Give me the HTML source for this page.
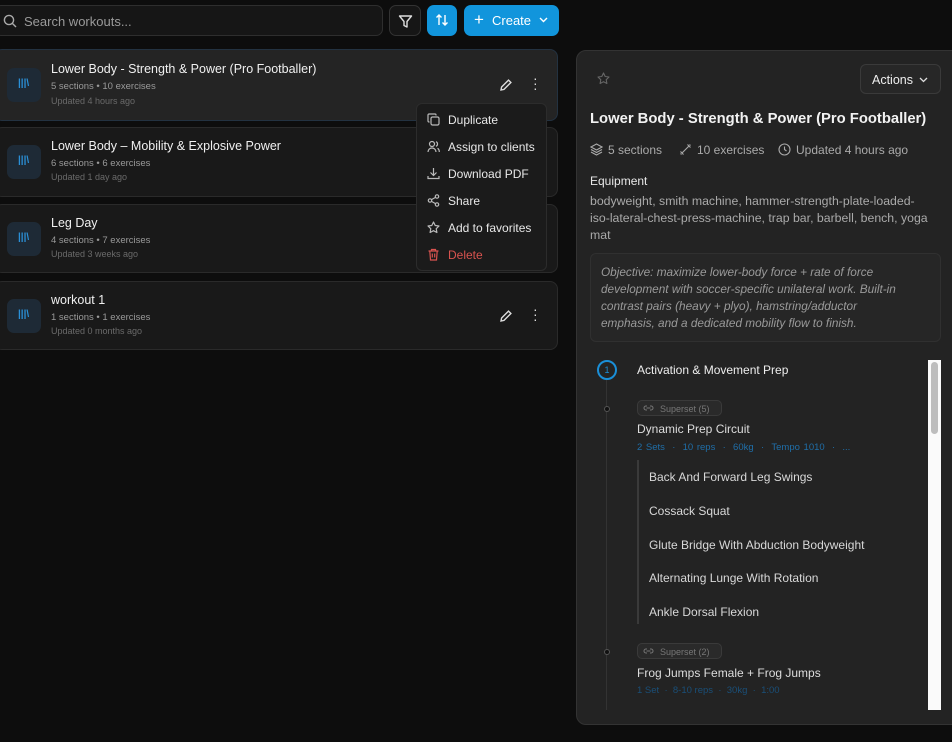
<!DOCTYPE html>
<html><head><style>
*{box-sizing:border-box;margin:0;padding:0}
body{width:952px;height:742px;background:#0d0d0d;font-family:"Liberation Sans",sans-serif;position:relative;overflow:hidden;color:#eee}
.abs{position:absolute}
.search{left:-6px;top:5px;width:389px;height:31px;border:1px solid #2e2e2e;border-radius:7px;background:#161616}
.search span{position:absolute;left:29px;top:8px;font-size:13px;color:#9a9a9a}
.btn{top:5px;height:31px;border-radius:7px}
.card{left:-6px;width:564px;border:1px solid #2a2a2a;border-radius:8px;background:#191919}
.card .ic{position:absolute;left:12px;width:34px;height:34px;border-radius:7px;background:#1e2a36}
.card .t{position:absolute;left:56px;font-size:12.5px;color:#f0f0f0}
.card .s{position:absolute;left:56px;font-size:9.5px;color:#9a9a9a}
.card .u{position:absolute;left:56px;font-size:9px;color:#6a6a6a}
.menu{left:416px;top:103px;width:131px;height:168px;background:#1b1b1b;border:1px solid #2c2c2c;border-radius:6px}
.mi{position:absolute;left:31px;font-size:12px;color:#e8e8e8}
.mic{position:absolute;left:10px}
.panel{left:576px;top:50px;width:390px;height:675px;background:#232323;border:1px solid #333;border-radius:10px}
.ex{position:absolute;left:649px;font-size:12px;color:#d8d8d8}
.badge{position:absolute;left:637px;width:85px;height:16px;border:1px solid #3a3a3a;border-radius:5px;background:#2a2a2a;font-size:9px;color:#777;padding:3px 0 0 22px}
</style></head><body>
<div class="abs search">
<svg class="abs" style="left:8px;top:8px" width="14" height="14" viewBox="0 0 14 14" fill="none" stroke="#aaa" stroke-width="1.4"><circle cx="6" cy="6" r="4.6"/><path d="M9.5 9.5L13 13"/></svg>
<span>Search workouts...</span></div>
<div class="abs btn" style="left:389px;width:32px;border:1px solid #333;background:#161616">
<svg class="abs" style="left:8px;top:8px" width="15" height="15" viewBox="0 0 15 15" fill="none" stroke="#ddd" stroke-width="1.4" stroke-linejoin="round"><path d="M1.5 2h12L9 7.5V13L6 11.5V7.5z"/></svg></div>
<div class="abs btn" style="left:427px;width:30px;background:#1195dc">
<svg class="abs" style="left:8px;top:8px" width="14" height="14" viewBox="0 0 14 14" fill="none" stroke="#fff" stroke-width="1.4"><path d="M4 12V2M1.5 4.5L4 2l2.5 2.5M10 2v10M7.5 9.5L10 12l2.5-2.5"/></svg></div>
<div class="abs btn" style="left:464px;width:95px;background:#1195dc">
<span class="abs" style="left:10px;top:5px;font-size:17px;color:#fff">+</span>
<span class="abs" style="left:28px;top:8px;font-size:13px;color:#fff">Create</span>
<svg class="abs" style="left:75px;top:12px" width="9" height="6" viewBox="0 0 9 6" fill="none" stroke="#fff" stroke-width="1.4"><path d="M1 1l3.5 3.5L8 1"/></svg></div>

<div class="abs card" style="top:49px;height:72px;background:#242424;border-color:#233241">
<div class="ic" style="top:18px"></div><div class="t" style="top:12px">Lower Body - Strength &amp; Power (Pro Footballer)</div><div class="s" style="top:31px">5 sections • 10 exercises</div><div class="u" style="top:46px">Updated 4 hours ago</div>
<svg class="abs" style="left:504px;top:28px" width="14" height="14" viewBox="0 0 14 14" fill="none" stroke="#ddd" stroke-width="1.4"><path d="M2 12l.6-3L9.5 2.1l2.4 2.4L5 11.4z"/></svg>
<span class="abs" style="left:538px;top:26px;color:#ddd;font-size:14px;line-height:5px;width:4px">·<br>·<br>·</span>
</div>
<div class="abs card" style="top:127px;height:70px"><div class="ic" style="top:17px"></div><div class="t" style="top:11px">Lower Body – Mobility &amp; Explosive Power</div><div class="s" style="top:30px">6 sections • 6 exercises</div><div class="u" style="top:44px">Updated 1 day ago</div></div>
<div class="abs card" style="top:204px;height:69px"><div class="ic" style="top:17px"></div><div class="t" style="top:11px">Leg Day</div><div class="s" style="top:30px">4 sections • 7 exercises</div><div class="u" style="top:44px">Updated 3 weeks ago</div></div>
<div class="abs card" style="top:281px;height:69px"><div class="ic" style="top:17px"></div><div class="t" style="top:11px">workout 1</div><div class="s" style="top:30px">1 sections • 1 exercises</div><div class="u" style="top:44px">Updated 0 months ago</div>
<svg class="abs" style="left:504px;top:27px" width="14" height="14" viewBox="0 0 14 14" fill="none" stroke="#ddd" stroke-width="1.4"><path d="M2 12l.6-3L9.5 2.1l2.4 2.4L5 11.4z"/></svg>
<span class="abs" style="left:538px;top:25px;color:#ddd;font-size:14px;line-height:5px;width:4px">·<br>·<br>·</span></div>
<div class="abs" style="left:18px;top:78px;color:#2a8fd6;font-size:10px;font-weight:bold">|||\</div>
<div class="abs" style="left:18px;top:155px;color:#2a8fd6;font-size:10px;font-weight:bold">|||\</div>
<div class="abs" style="left:18px;top:232px;color:#2a8fd6;font-size:10px;font-weight:bold">|||\</div>
<div class="abs" style="left:18px;top:309px;color:#2a8fd6;font-size:10px;font-weight:bold">|||\</div>

<div class="abs menu">
<svg class="mic" style="top:9px" width="13" height="13" viewBox="0 0 13 13" fill="none" stroke="#bbb" stroke-width="1.2"><rect x="4" y="4" width="8" height="8" rx="1.5"/><path d="M2.5 9H2a1 1 0 0 1-1-1V2a1 1 0 0 1 1-1h6a1 1 0 0 1 1 1v.5"/></svg><div class="mi" style="top:9px">Duplicate</div>
<svg class="mic" style="top:36px" width="13" height="13" viewBox="0 0 13 13" fill="none" stroke="#bbb" stroke-width="1.2"><circle cx="5" cy="4" r="2.5"/><path d="M1 12c0-2.5 2-4 4-4s4 1.5 4 4M9 1.7a2.5 2.5 0 0 1 0 4.6M10.5 8.3c1 .5 1.8 1.8 1.8 3.7"/></svg><div class="mi" style="top:36px">Assign to clients</div>
<svg class="mic" style="top:63px" width="13" height="13" viewBox="0 0 13 13" fill="none" stroke="#bbb" stroke-width="1.2"><path d="M6.5 1v7M3.5 5.5l3 3 3-3M1 9v2.5h11V9"/></svg><div class="mi" style="top:63px">Download PDF</div>
<svg class="mic" style="top:90px" width="13" height="13" viewBox="0 0 13 13" fill="none" stroke="#bbb" stroke-width="1.2"><circle cx="10" cy="2.5" r="1.7"/><circle cx="3" cy="6.5" r="1.7"/><circle cx="10" cy="10.5" r="1.7"/><path d="M4.5 5.6l4-2.2M4.5 7.4l4 2.2"/></svg><div class="mi" style="top:90px">Share</div>
<svg class="mic" style="top:117px" width="13" height="13" viewBox="0 0 13 13" fill="none" stroke="#bbb" stroke-width="1.2" stroke-linejoin="round"><path d="M6.5 1l1.7 3.5 3.8.5-2.8 2.7.7 3.8-3.4-1.8-3.4 1.8.7-3.8L1 5l3.8-.5z"/></svg><div class="mi" style="top:117px">Add to favorites</div>
<svg class="mic" style="top:144px" width="13" height="13" viewBox="0 0 13 13" fill="none" stroke="#d9534f" stroke-width="1.2"><path d="M1.5 3h10M4.5 3V1.5h4V3M2.8 3l.7 9h6l.7-9M5.3 5.5v4M7.7 5.5v4"/></svg><div class="mi" style="top:144px;color:#d9534f">Delete</div>
</div>

<div class="abs panel"></div>
<svg class="abs" style="left:597px;top:72px" width="13" height="13" viewBox="0 0 13 13" fill="none" stroke="#666" stroke-width="1.1" stroke-linejoin="round"><path d="M6.5 1l1.7 3.5 3.8.5-2.8 2.7.7 3.8-3.4-1.8-3.4 1.8.7-3.8L1 5l3.8-.5z"/></svg>
<div class="abs" style="left:860px;top:64px;width:81px;height:30px;border:1px solid #3a3a3a;border-radius:6px;background:#272727"><span class="abs" style="left:11px;top:8px;font-size:12.5px;color:#eee">Actions</span><svg class="abs" style="left:58px;top:12px" width="9" height="6" viewBox="0 0 9 6" fill="none" stroke="#ddd" stroke-width="1.3"><path d="M1 1l3.5 3.5L8 1"/></svg></div>
<div class="abs" style="left:590px;top:111px;font-size:14.8px;font-weight:bold;color:#f2f2f2">Lower Body - Strength &amp; Power (Pro Footballer)</div>
<svg class="abs" style="left:590px;top:143px" width="13" height="13" viewBox="0 0 13 13" fill="none" stroke="#aaa" stroke-width="1.1"><path d="M6.5 1L12 4 6.5 7 1 4zM1 6.5l5.5 3 5.5-3M1 9l5.5 3L12 9"/></svg>
<div class="abs" style="left:608px;top:143px;font-size:12px;color:#aaa">5 sections</div>
<svg class="abs" style="left:679px;top:143px" width="13" height="13" viewBox="0 0 13 13" fill="none" stroke="#aaa" stroke-width="1.1"><path d="M3 10l7-7M1.5 8.5l3 3M8.5 1.5l3 3M2.5 11.5l-1-1M11.5 2.5l-1-1"/></svg>
<div class="abs" style="left:697px;top:143px;font-size:12px;color:#aaa">10 exercises</div>
<svg class="abs" style="left:778px;top:143px" width="13" height="13" viewBox="0 0 13 13" fill="none" stroke="#aaa" stroke-width="1.1"><circle cx="6.5" cy="6.5" r="5.5"/><path d="M6.5 3.5v3l2 1.5"/></svg>
<div class="abs" style="left:796px;top:143px;font-size:12px;color:#aaa">Updated 4 hours ago</div>
<div class="abs" style="left:590px;top:174px;font-size:12px;color:#e8e8e8">Equipment</div>
<div class="abs" style="left:590px;top:193px;width:340px;font-size:12.3px;line-height:17px;color:#aaa">bodyweight, smith machine, hammer-strength-plate-loaded-iso-lateral-chest-press-machine, trap bar, barbell, bench, yoga mat</div>
<div class="abs" style="left:590px;top:253px;width:351px;height:89px;border:1px solid #303030;border-radius:6px;background:#262626"></div>
<div class="abs" style="left:601px;top:264px;width:305px;font-size:11.8px;line-height:17px;color:#9a9a9a;font-style:italic">Objective: maximize lower-body force + rate of force development with soccer-specific unilateral work. Built-in contrast pairs (heavy + plyo), hamstring/adductor emphasis, and a dedicated mobility flow to finish.</div>

<div class="abs" style="left:606px;top:380px;width:1px;height:330px;background:#333"></div>
<div class="abs" style="left:597px;top:360px;width:20px;height:20px;border:2px solid #1a8fd8;border-radius:50%;background:#232323;font-size:9px;color:#1a8fd8;text-align:center;line-height:16px">1</div>
<div class="abs" style="left:637px;top:363px;font-size:12px;color:#eee">Activation &amp; Movement Prep</div>
<div class="abs" style="left:604px;top:406px;width:6px;height:6px;border-radius:50%;background:#111;border:1px solid #555"></div>
<div class="abs" style="left:604px;top:649px;width:6px;height:6px;border-radius:50%;background:#111;border:1px solid #555"></div>
<div class="badge" style="top:400px">Superset (5)</div>
<div class="badge" style="top:643px">Superset (2)</div>
<svg class="abs" style="left:643px;top:405px" width="11" height="6" viewBox="0 0 11 6" fill="none" stroke="#777" stroke-width="1"><path d="M4 1H3a2 2 0 0 0 0 4h1M7 1h1a2 2 0 0 1 0 4H7M3.5 3h4"/></svg>
<svg class="abs" style="left:643px;top:648px" width="11" height="6" viewBox="0 0 11 6" fill="none" stroke="#777" stroke-width="1"><path d="M4 1H3a2 2 0 0 0 0 4h1M7 1h1a2 2 0 0 1 0 4H7M3.5 3h4"/></svg>
<div class="abs" style="left:637px;top:422px;font-size:12px;color:#ddd">Dynamic Prep Circuit</div>
<div class="abs" style="left:637px;top:442px;font-size:9.5px;color:#1f6ea8;word-spacing:1px">2 Sets &nbsp;· &nbsp;10 reps &nbsp;· &nbsp;60kg &nbsp;· &nbsp;Tempo 1010 &nbsp;· &nbsp;...</div>
<div class="abs" style="left:637px;top:460px;width:2px;height:164px;background:#3a3a3a"></div>
<div class="ex" style="top:470px">Back And Forward Leg Swings</div>
<div class="ex" style="top:504px">Cossack Squat</div>
<div class="ex" style="top:538px">Glute Bridge With Abduction Bodyweight</div>
<div class="ex" style="top:571px">Alternating Lunge With Rotation</div>
<div class="ex" style="top:605px">Ankle Dorsal Flexion</div>
<div class="abs" style="left:637px;top:666px;font-size:12px;color:#ddd">Frog Jumps Female + Frog Jumps</div>
<div class="abs" style="left:637px;top:685px;font-size:9.5px;color:#1a4f78">1 Set &nbsp;· &nbsp;8-10 reps &nbsp;· &nbsp;30kg &nbsp;· &nbsp;1:00</div>
<div class="abs" style="left:928px;top:360px;width:13px;height:350px;background:#fafafa"></div>
<div class="abs" style="left:931px;top:362px;width:7px;height:72px;border-radius:4px;background:#bdbdbd"></div>
</body></html>
